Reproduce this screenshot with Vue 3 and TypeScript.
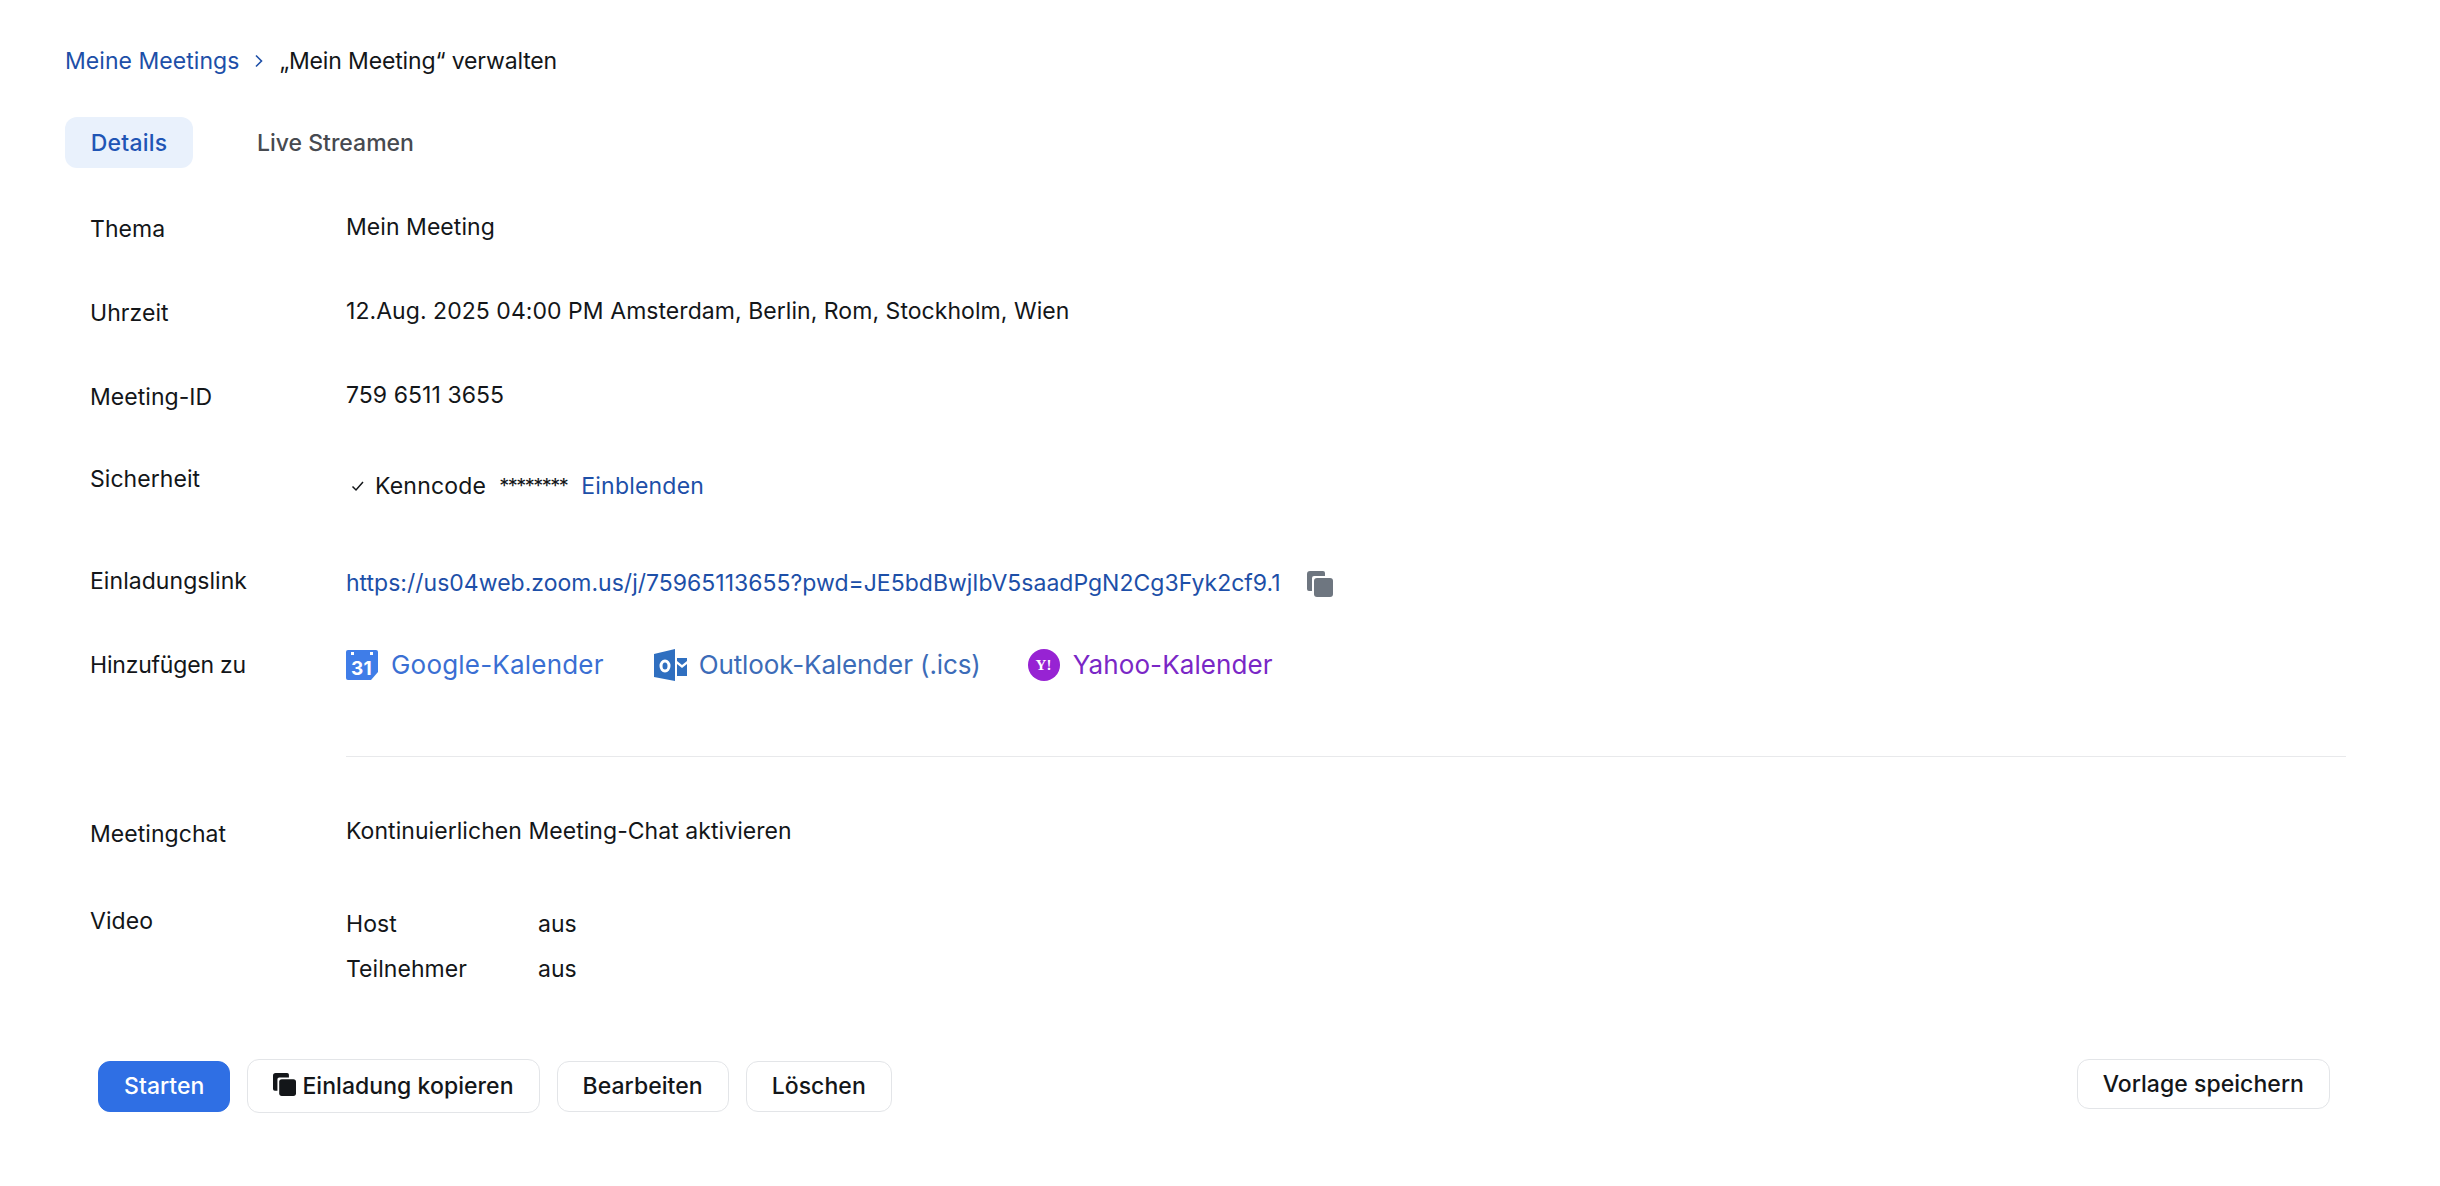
<script setup lang="ts">
const calendars = [
  { name: 'Google-Kalender', cls: 'google' },
  { name: 'Outlook-Kalender (.ics)', cls: 'outlook' },
  { name: 'Yahoo-Kalender', cls: 'yahoo' },
]
</script>

<template>
  <main class="page">
    <nav class="crumbs">
      <a class="link">Meine Meetings</a>
      <svg class="chev" width="10" height="16" viewBox="0 0 10 16"><path d="M2 2.500 7.500 8 2 13.500" fill="none" stroke="#1d4fa8" stroke-width="1.6"/></svg>
      <span class="title">„Mein Meeting“ verwalten</span>
    </nav>

    <div class="tabs">
      <button class="tab active">Details</button>
      <button class="tab">Live Streamen</button>
    </div>

    <section class="details">
      <div class="row r84">
        <div class="label nudge">Thema</div>
        <div class="value shift">Mein Meeting</div>
      </div>
      <div class="row r84">
        <div class="label nudge">Uhrzeit</div>
        <div class="value shift">12.Aug. 2025 04:00 PM Amsterdam, Berlin, Rom, Stockholm, Wien</div>
      </div>
      <div class="row r85">
        <div class="label nudge">Meeting-ID</div>
        <div class="value shift">759 6511 3655</div>
      </div>
      <div class="row r102">
        <div class="label">Sicherheit</div>
        <div class="value security">
          <svg width="16" height="16" viewBox="0 0 16 16"><path d="M2.500 8.500 6 12 13 4" fill="none" stroke="#131619" stroke-width="1.500"/></svg>
          <span class="code">Kenncode</span>
          <span class="stars">********</span>
          <a class="link">Einblenden</a>
        </div>
      </div>
      <div class="row r84">
        <div class="label">Einladungslink</div>
        <div class="value invite">
          <a class="link url">https://us04web.zoom.us/j/75965113655?pwd=JE5bdBwjIbV5saadPgN2Cg3Fyk2cf9.1</a>
          <svg class="copy" width="26" height="26" viewBox="0 0 26 26">
            <path d="M0 3a3 3 0 0 1 3-3h13a2 2 0 0 1 2 2v3H7a2 2 0 0 0-2 2v13H2a2 2 0 0 1-2-2z" fill="#6e7680"/>
            <rect x="7" y="7" width="19" height="19" rx="3" fill="#6e7680"/>
          </svg>
        </div>
      </div>
      <div class="row r107">
        <div class="label tight">Hinzufügen zu</div>
        <div class="value calendars">
          <a v-for="c in calendars" :key="c.cls" class="cal" :class="c.cls">
            <svg v-if="c.cls === 'google'" width="32" height="30" viewBox="0 0 32 30">
              <path d="M2 0h28a2 2 0 0 1 2 2v20l-7 8H2a2 2 0 0 1-2-2V2a2 2 0 0 1 2-2z" fill="#3f7de8"/>
              <rect x="5" y="2" width="3" height="3" fill="#fff"/>
              <rect x="24" y="2" width="3" height="3" fill="#fff"/>
              <text x="15.500" y="25" text-anchor="middle" class="glyph31">31</text>
            </svg>
            <svg v-else-if="c.cls === 'outlook'" width="33" height="32" viewBox="0 0 33 32">
              <path d="M0 5 21 0v32L0 28z" fill="#2f6fc0"/>
              <path d="M23 9h10v3l-5 4-5-4zM23 15l5 4 5-4v12H23z" fill="#2f6fc0"/>
              <ellipse cx="11" cy="17" rx="4" ry="5" fill="none" stroke="#fff" stroke-width="3"/>
            </svg>
            <svg v-else width="32" height="32" viewBox="0 0 32 32">
              <circle cx="16" cy="16" r="16" fill="#9723d3"/>
              <text x="15.500" y="21" text-anchor="middle" class="glyphY">Y!</text>
            </svg>
            <span>{{ c.name }}</span>
          </a>
        </div>
      </div>
      <div class="divider"></div>
      <div class="row r89">
        <div class="label nudge">Meetingchat</div>
        <div class="value">Kontinuierlichen Meeting-Chat aktivieren</div>
      </div>
      <div class="row">
        <div class="label video-label">Video</div>
        <div class="value video">
          <span>Host</span><span>aus</span>
          <span>Teilnehmer</span><span>aus</span>
        </div>
      </div>
    </section>

    <footer class="actions">
      <div class="left">
        <button class="btn primary">Starten</button>
        <button class="btn tall">
          <svg width="23" height="23" viewBox="0 0 26 26">
            <path d="M0 3a3 3 0 0 1 3-3h13a2 2 0 0 1 2 2v3H7a2 2 0 0 0-2 2v13H2a2 2 0 0 1-2-2z" fill="#131619"/>
            <rect x="7" y="7" width="19" height="19" rx="3" fill="#131619"/>
          </svg>
          Einladung kopieren
        </button>
        <button class="btn">Bearbeiten</button>
        <button class="btn">Löschen</button>
      </div>
      <button class="btn save">Vorlage speichern</button>
    </footer>
  </main>
</template>

<style>
html, body { margin: 0; background: #fff; }
</style>

<style scoped>
.page {
  box-sizing: border-box;
  width: 2440px;
  height: 1186px;
  padding: 45px 94px 0 65px;
  font-family: Inter, "Liberation Sans", sans-serif;
  font-size: 23px;
  letter-spacing: 0.05px;
  line-height: 32px;
  color: #131619;
}
.link { color: #1d4fa8; }
.crumbs { display: flex; align-items: center; gap: 15px; }
.chev { margin: 0 1px 0 0; }
.title { margin-left: -1px; letter-spacing: -0.15px; }
.tabs { display: flex; gap: 39px; margin-top: 40px; }
.tab {
  height: 51px;
  padding: 0 25px;
  border: 0;
  border-radius: 12px;
  background: transparent;
  font: inherit;
  font-weight: 500;
  letter-spacing: 0;
  color: #474a50;
}
.tab.active { width: 128px; letter-spacing: 0.2px; background: #e9f1fc; color: #1f55b5; }
.details { margin-top: 42px; padding-left: 25px; }
.row { display: grid; grid-template-columns: 256px 1fr; }
.r84 { height: 84px; }
.r85 { height: 85px; }
.r89 { height: 89px; }
.r102 { height: 102px; }
.r107 { height: 107px; }
.nudge { padding-top: 3px; }
.shift { padding-top: 1px; }
.tight { letter-spacing: -0.2px; }
.video-label { padding-top: 1px; }
.security { display: flex; align-items: center; height: 32px; padding-top: 7px; letter-spacing: 0.2px; }
.security svg { margin: 0 9px 0 4px; }
.code { margin-right: 13px; }
.stars { margin-right: 14px; font-size: 20px; letter-spacing: -1.5px; }
.invite { display: flex; padding-top: 2px; }
.url { white-space: nowrap; letter-spacing: 0.01px; }
.copy { margin: 4px 0 0 26px; }
.calendars { display: flex; gap: 47px; font-size: 26px; }
.cal { display: flex; align-items: center; gap: 13px; height: 32px; }
.google { color: #3a6fd3; margin-right: 3px; letter-spacing: 0.2px; }
.outlook { color: #3c6cb8; gap: 12px; letter-spacing: -0.12px; }
.yahoo { color: #7a27c6; letter-spacing: 0.1px; }
.glyph31 { font: 700 19px Inter, "Liberation Sans", sans-serif; fill: #fff; }
.glyphY { font: 700 15px "Liberation Serif", serif; fill: #fff; }
.divider { height: 1px; margin: 0 0 58px 256px; background: #e8e9eb; }
.video {
  display: grid;
  grid-template-columns: 192px 1fr;
  row-gap: 13px;
  padding-top: 4px;
}
.actions {
  display: flex;
  justify-content: space-between;
  align-items: flex-start;
  padding: 0 16px 0 33px;
  margin-top: 74px;
}
.left { display: flex; gap: 17px; align-items: center; }
.btn {
  display: inline-flex;
  align-items: center;
  height: 51px;
  padding: 0 25px;
  border: 1px solid #e3e5e8;
  border-radius: 12px;
  background: #fff;
  font: inherit;
  font-weight: 500;
  letter-spacing: inherit;
  color: #131619;
}
.tall { height: 54px; gap: 6px; }
.tall svg { margin-top: -4px; }
.primary { background: #2f6fe4; border-color: #2f6fe4; color: #fff; }
.save { height: 50px; }
</style>
